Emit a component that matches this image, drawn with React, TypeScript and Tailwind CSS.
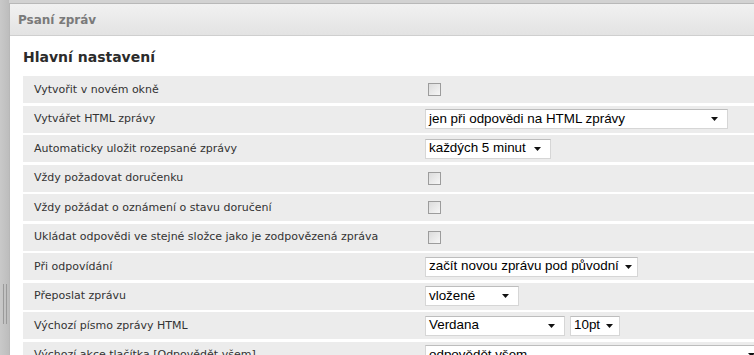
const rows: { label: string; kind: "check" | "select"; value?: string; width?: number; extra?: { value: string; width: number } }[] = [
  { label: "Vytvořit v novém okně", kind: "check" },
  { label: "Vytvářet HTML zprávy", kind: "select", value: "jen při odpovědi na HTML zprávy", width: 303 },
  { label: "Automaticky uložit rozepsané zprávy", kind: "select", value: "každých 5 minut", width: 126 },
  { label: "Vždy požadovat doručenku", kind: "check" },
  { label: "Vždy požádat o oznámení o stavu doručení", kind: "check" },
  { label: "Ukládat odpovědi ve stejné složce jako je zodpovězená zpráva", kind: "check" },
  { label: "Při odpovídání", kind: "select", value: "začít novou zprávu pod původní", width: 213 },
  { label: "Přeposlat zprávu", kind: "select", value: "vložené", width: 94 },
  { label: "Výchozí písmo zprávy HTML", kind: "select", value: "Verdana", width: 140, extra: { value: "10pt", width: 50 } },
  { label: "Výchozí akce tlačítka [Odpovědět všem]", kind: "select", value: "odpovědět všem", width: 340 },
];

function Select({ value, width }: { value: string; width: number }) {
  return (
    <div
      className="flex h-[20px] items-center justify-between border border-[#d6d6d6] border-t-[#bdbdbd] bg-white pl-[3px] pr-[9px] text-[13.4px] text-black [font-family:'Liberation_Sans',Arial,sans-serif]"
      style={{ width }}
    >
      <span className="whitespace-nowrap">{value}</span>
      <svg width="7" height="4" viewBox="0 0 7 4" className="ml-[6px] shrink-0">
        <path d="M0 0h7L3.5 4z" fill="#111" />
      </svg>
    </div>
  );
}

function Checkbox() {
  return <div className="ml-[3px] h-[13px] w-[13px] border border-[#9c9c9c] bg-gradient-to-br from-[#dcdcdc] to-[#f6f6f6]" />;
}

export default function App() {
  return (
    <div className="flex h-[355px] w-[754px] overflow-hidden bg-[#d2d2d2] [font-family:'DejaVu_Sans',Verdana,sans-serif]">
      <div className="relative w-[9px] shrink-0 bg-gradient-to-r from-[#c9c9c9] to-[#bdbdbd]">
        <div className="absolute left-[3px] top-[284px] flex gap-[2px]">
          <div className="h-[40px] w-[1px] bg-[#9a9a9a]" />
          <div className="h-[40px] w-[1px] bg-[#9a9a9a]" />
        </div>
      </div>
      <div className="mt-[3px] flex min-w-0 flex-1 flex-col border-l border-t border-[#b8b8b8] bg-white">
        <div className="flex h-[32px] shrink-0 items-center border-b border-[#cfcfcf] bg-gradient-to-b from-[#f1f1f1] to-[#e3e3e3] pl-[8px] pt-[1px] text-[12px] font-bold text-[#7a7a7a]">
          Psaní zpráv
        </div>
        <div className="pl-[13px] pt-[12px]">
          <h2 className="mb-[10px] text-[14px] font-bold leading-[18px] text-[#2b2b2b]">Hlavní nastavení</h2>
          <div className="flex flex-col gap-[2.5px]">
            {rows.map((r) => (
              <div key={r.label} className="flex h-[27px] shrink-0 items-center bg-[#ececec] text-[11px] text-[#333]">
                <div className="w-[402px] shrink-0 pl-[11px] pt-[1px] whitespace-nowrap">{r.label}</div>
                <div className="flex items-center gap-[5px]">
                  {r.kind === "check" ? (
                    <Checkbox />
                  ) : (
                    <>
                      <Select value={r.value!} width={r.width!} />
                      {r.extra && <Select value={r.extra.value} width={r.extra.width} />}
                    </>
                  )}
                </div>
              </div>
            ))}
          </div>
        </div>
      </div>
    </div>
  );
}
